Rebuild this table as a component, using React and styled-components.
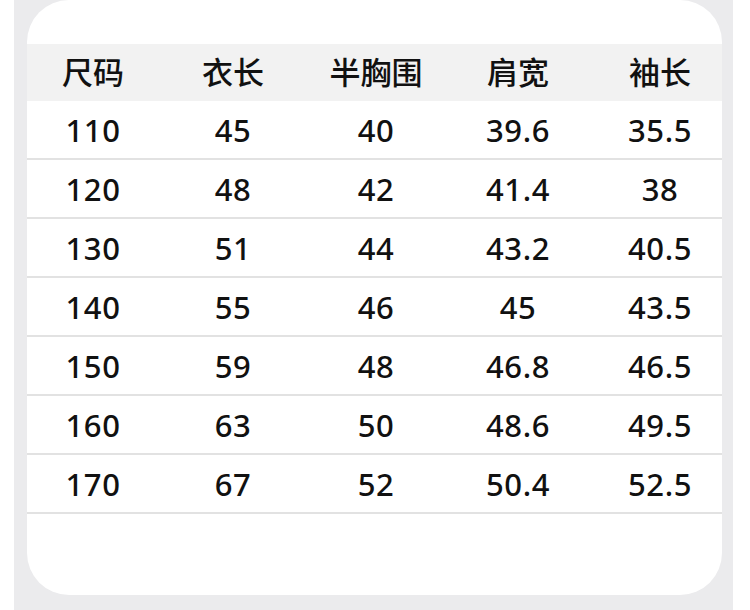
import React from "react";
import styled, { createGlobalStyle } from "styled-components";

const GlobalStyle = createGlobalStyle`
    html, body {
        margin: 0;
        padding: 0;
        background: #ffffff;
    }
    body {
        font-family: "Noto Sans", "Noto Sans CJK SC", sans-serif;
        color: #111111;
    }
`;

const Page = styled.div`
    width: 750px;
    height: 610px;
    padding-left: 14px;
    box-sizing: border-box;
    display: flex;
`;

const Backdrop = styled.div`
    width: 719px;
    height: 610px;
    background: #ebebed;
    box-sizing: border-box;
    padding: 0 11px 15px 13px;
    display: flex;
`;

const Card = styled.div`
    flex: 1;
    min-width: 0;
    background: #ffffff;
    border-radius: 42px;
    padding-top: 44px;
    box-sizing: border-box;
`;

const Row = styled.div`
    display: grid;
    grid-template-columns: 132px 148px 138px 146px 1fr;
    align-items: center;
    height: ${(p) => (p.header ? "57px" : "59px")};
    box-sizing: border-box;
    background: ${(p) => (p.header ? "#f2f2f2" : "#ffffff")};
    border-bottom: ${(p) => (p.header ? "none" : "2px solid #e2e2e2")};
`;

const Cell = styled.div`
    text-align: center;
    font-size: 31px;
    font-weight: 500;
    line-height: 1;
    letter-spacing: ${(p) => (p.header ? "0" : "0.6px")};
    white-space: nowrap;
    padding-top: ${(p) => (p.header ? "0" : "1px")};
    padding-left: ${(p) => (p.last ? "7px" : "0")};
`;

const headers = ["尺码", "衣长", "半胸围", "肩宽", "袖长"];

const rows = [
    ["110", "45", "40", "39.6", "35.5"],
    ["120", "48", "42", "41.4", "38"],
    ["130", "51", "44", "43.2", "40.5"],
    ["140", "55", "46", "45", "43.5"],
    ["150", "59", "48", "46.8", "46.5"],
    ["160", "63", "50", "48.6", "49.5"],
    ["170", "67", "52", "50.4", "52.5"],
];

function App() {
    return (
        <React.Fragment>
            <GlobalStyle />
            <Page>
                <Backdrop>
                    <Card>
                        <Row header>
                            {headers.map((h, i) => (
                                <Cell header last={i === 4} key={h}>{h}</Cell>
                            ))}
                        </Row>
                        {rows.map((r) => (
                            <Row key={r[0]}>
                                {r.map((v, i) => (
                                    <Cell last={i === 4} key={i}>{v}</Cell>
                                ))}
                            </Row>
                        ))}
                    </Card>
                </Backdrop>
            </Page>
        </React.Fragment>
    );
}

export default App;
